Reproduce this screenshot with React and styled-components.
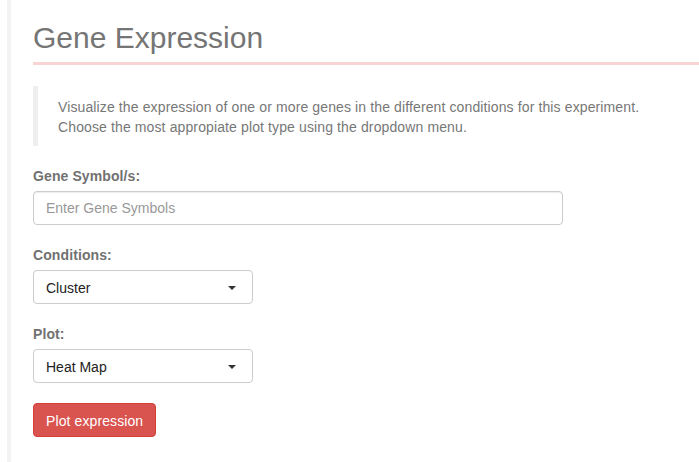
import React from 'react';
import styled, { createGlobalStyle } from 'styled-components';

const GlobalStyle = createGlobalStyle`
    body {
        margin: 0;
        background: #fff;
        font-family: "Liberation Sans", Arial, sans-serif;
        font-size: 14px;
        line-height: 20px;
        color: #333;
    }
`;

const Page = styled.div`
    padding-left: 7px;
    min-height: 100vh;
    display: flex;
`;

const Main = styled.main`
    flex: 1;
    border-left: 4px solid #f3f3f3;
    padding-left: 22px;
    min-height: 100vh;
`;

const Header = styled.h2`
    margin: 21px 0 21px;
    padding-bottom: 8px;
    border-bottom: 3px solid #fad4d4;
    font-size: 30px;
    line-height: 33px;
    font-weight: normal;
    color: #757575;
`;

const Quote = styled.blockquote`
    margin: 0 0 20px;
    padding: 11px 20px 9px;
    border-left: 5px solid #eee;
    color: #777;
    font-size: 14px;
    line-height: 20px;
    letter-spacing: 0.12px;
`;

const FormGroup = styled.div`
    margin-bottom: 20px;
`;

const Label = styled.label`
    display: block;
    margin-bottom: 5px;
    font-weight: bold;
    color: #717171;
    letter-spacing: 0.1px;
`;

const TextInput = styled.input`
    box-sizing: border-box;
    display: block;
    width: 530px;
    height: 34px;
    padding: 6px 12px;
    border: 1px solid #ccc;
    border-radius: 4px;
    font-family: inherit;
    font-size: 14px;
    color: #555;
    box-shadow: inset 0 1px 1px rgba(0, 0, 0, 0.075);
    &::placeholder {
        color: #999;
    }
`;

const Dropdown = styled.div`
    box-sizing: border-box;
    width: 220px;
    height: 34px;
    padding: 1px 12px 0;
    border: 1px solid #ccc;
    border-radius: 4px;
    display: flex;
    align-items: center;
    justify-content: space-between;
    color: #222;
    background: #fff;
`;

const Caret = styled.span`
    width: 0;
    height: 0;
    margin-right: 4px;
    border-left: 4px solid transparent;
    border-right: 4px solid transparent;
    border-top: 4px solid #333;
`;

const Button = styled.button`
    height: 34px;
    padding: 7px 12px 5px;
    border: 1px solid #d43f3a;
    border-radius: 4px;
    background: #d9534f;
    color: #fff;
    font-family: inherit;
    font-size: 14px;
    line-height: 20px;
    letter-spacing: 0.1px;
    cursor: pointer;
`;

const Select = ({ value }) => (
    <Dropdown>
        <span>{value}</span>
        <Caret />
    </Dropdown>
);

export default function App() {
    return (
        <Page>
            <GlobalStyle />
            <Main>
                <Header>Gene Expression</Header>
                <Quote>
                    Visualize the expression of one or more genes in the different conditions for this experiment.
                    <br />
                    Choose the most appropiate plot type using the dropdown menu.
                </Quote>

                <FormGroup>
                    <Label>Gene Symbol/s:</Label>
                    <TextInput placeholder="Enter Gene Symbols" />
                </FormGroup>

                <FormGroup>
                    <Label>Conditions:</Label>
                    <Select value="Cluster" />
                </FormGroup>

                <FormGroup>
                    <Label>Plot:</Label>
                    <Select value="Heat Map" />
                </FormGroup>

                <Button>Plot expression</Button>
            </Main>
        </Page>
    );
}
